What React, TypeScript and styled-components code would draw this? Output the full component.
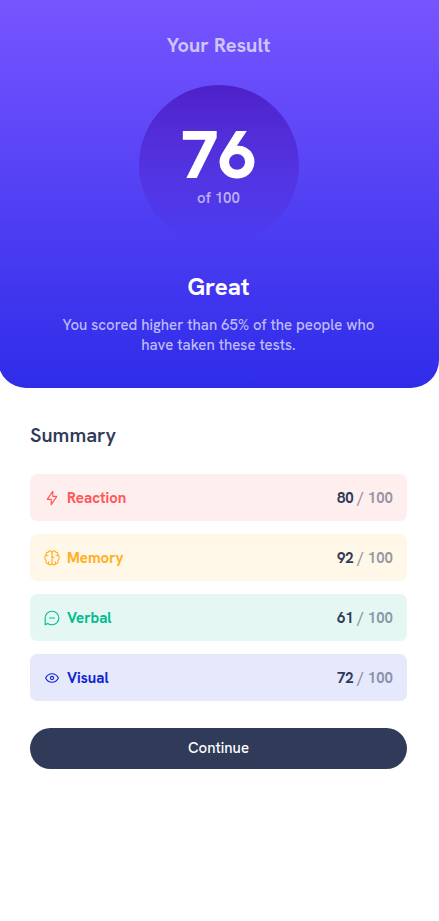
import React from "react";
import styled, { createGlobalStyle } from "styled-components";

const GlobalStyle = createGlobalStyle`
  *, *::before, *::after { box-sizing: border-box; }
  body { margin: 0; background: #fff; font-family: "Hanken Grotesk", Inter, Roboto, sans-serif; }
  h1, h2, p, ul { margin: 0; padding: 0; }
`;

const Result = styled.section`
  display: flex;
  flex-direction: column;
  align-items: center;
  margin-left: -2px;
  padding: 32px 56px 33px;
  border-radius: 0 0 28px 28px;
  background: linear-gradient(180deg, #7755ff, #2f2ce9);
  color: #fff;
  text-align: center;
`;

const ResultTitle = styled.h1`
  font-size: 20px;
  line-height: 26px;
  font-weight: 700;
  color: #cfc5fd;
`;

const Score = styled.div`
  display: flex;
  flex-direction: column;
  align-items: center;
  width: 160px;
  height: 160px;
  margin-top: 27px;
  padding-top: 37px;
  border-radius: 50%;
  background: linear-gradient(180deg, #4d21c9, rgba(37, 33, 201, 0));
`;

const ScoreValue = styled.strong`
  font-size: 67px;
  line-height: 66px;
  font-weight: 800;
`;

const ScoreTotal = styled.span`
  font-size: 15px;
  line-height: 20px;
  font-weight: 600;
  color: #bab0f3;
`;

const Verdict = styled.h2`
  margin-top: 26px;
  font-size: 24px;
  line-height: 32px;
  font-weight: 700;
`;

const Message = styled.p`
  max-width: 328px;
  margin-top: 12px;
  font-size: 15px;
  line-height: 20px;
  font-weight: 500;
  color: #bdbcf9;
`;

const Summary = styled.section`
  padding: 33px 32px 32px 30px;
`;

const SummaryTitle = styled.h2`
  font-size: 20px;
  line-height: 28px;
  font-weight: 600;
  color: #303b59;
`;

const CategoryList = styled.ul`
  display: grid;
  gap: 13px;
  margin: 25px 0 27px;
  list-style: none;
`;

const Category = styled.li<{ $color: string; $background: string }>`
  display: flex;
  align-items: center;
  height: 47px;
  padding: 0 14px;
  border-radius: 7px;
  background: ${({ $background }) => $background};
  color: ${({ $color }) => $color};
  font-size: 15px;
  line-height: 20px;
  font-weight: 700;
`;

const Icon = styled.svg`
  width: 16px;
  height: 16px;
  margin-right: 7px;
  fill: none;
  stroke: currentColor;
  stroke-width: 1.4;
  stroke-linecap: round;
  stroke-linejoin: round;
`;

const CategoryScore = styled.span`
  margin-left: auto;
  color: #303b59;
`;

const OutOf = styled.span`
  color: rgba(48, 59, 89, 0.5);
`;

const ContinueButton = styled.button`
  display: block;
  width: 100%;
  height: 41px;
  padding: 0 16px 2px;
  border: 0;
  border-radius: 21px;
  background: #303b59;
  color: #fff;
  font-family: inherit;
  font-size: 15px;
  font-weight: 500;
  cursor: pointer;
`;

const categories = [
  {
    name: "Reaction",
    score: 80,
    color: "#ff5757",
    background: "#ffeeee",
    icon: <path d="M11 8V1.700L4 11.700h5v6.600L16 8h-5Z" />,
  },
  {
    name: "Memory",
    score: 92,
    color: "#ffb01f",
    background: "#fff7e8",
    icon: (
      <>
        <path d="M10 3.2A2.4 2.4 0 0 0 5.4 2.6 3.1 3.1 0 0 0 2.5 6.5 4.3 4.3 0 0 0 2.5 13 3.3 3.3 0 0 0 5.5 17.3 2.4 2.4 0 0 0 10 16.8Z" />
        <path d="M10 3.2a2.4 2.4 0 0 1 4.6-.6 3.1 3.1 0 0 1 2.9 3.9 4.3 4.3 0 0 1 0 6.5 3.3 3.3 0 0 1-3 4.3A2.4 2.4 0 0 1 10 16.8" />
        <path d="M2.5 6.500 4.800 7.300M17.500 6.500l-2.300.8M5.500 17.300l.4-2.600M14.500 17.300l-.4-2.600M10 8.300l2.300 1.400" />
      </>
    ),
  },
  {
    name: "Verbal",
    score: 61,
    color: "#00bd91",
    background: "#e5f7f3",
    icon: <path d="M7 10h6M10 18.5A8.5 8.5 0 1 0 1.500 10v8.500l3.200-1.700A8.500 8.500 0 0 0 10 18.500Z" />,
  },
  {
    name: "Visual",
    score: 72,
    color: "#1125d4",
    background: "#e6e8fb",
    icon: (
      <>
        <path d="M2 10c1.700-3.300 4.600-5.300 8-5.300s6.300 2 8 5.300c-1.700 3.300-4.600 5.300-8 5.300S3.700 13.300 2 10Z" />
        <circle cx="10" cy="10" r="2" />
      </>
    ),
  },
];

export default function App() {
  return (
    <main>
      <GlobalStyle />
      <Result>
        <ResultTitle>Your Result</ResultTitle>
        <Score>
          <ScoreValue>76</ScoreValue>
          <ScoreTotal>of 100</ScoreTotal>
        </Score>
        <Verdict>Great</Verdict>
        <Message>You scored higher than 65% of the people who have taken these tests.</Message>
      </Result>
      <Summary>
        <SummaryTitle>Summary</SummaryTitle>
        <CategoryList>
          {categories.map(({ name, score, color, background, icon }) => (
            <Category key={name} $color={color} $background={background}>
              <Icon viewBox="0 0 20 20" aria-hidden="true">{icon}</Icon>
              {name}
              <CategoryScore>
                {score} <OutOf>/ 100</OutOf>
              </CategoryScore>
            </Category>
          ))}
        </CategoryList>
        <ContinueButton type="button">Continue</ContinueButton>
      </Summary>
    </main>
  );
}
